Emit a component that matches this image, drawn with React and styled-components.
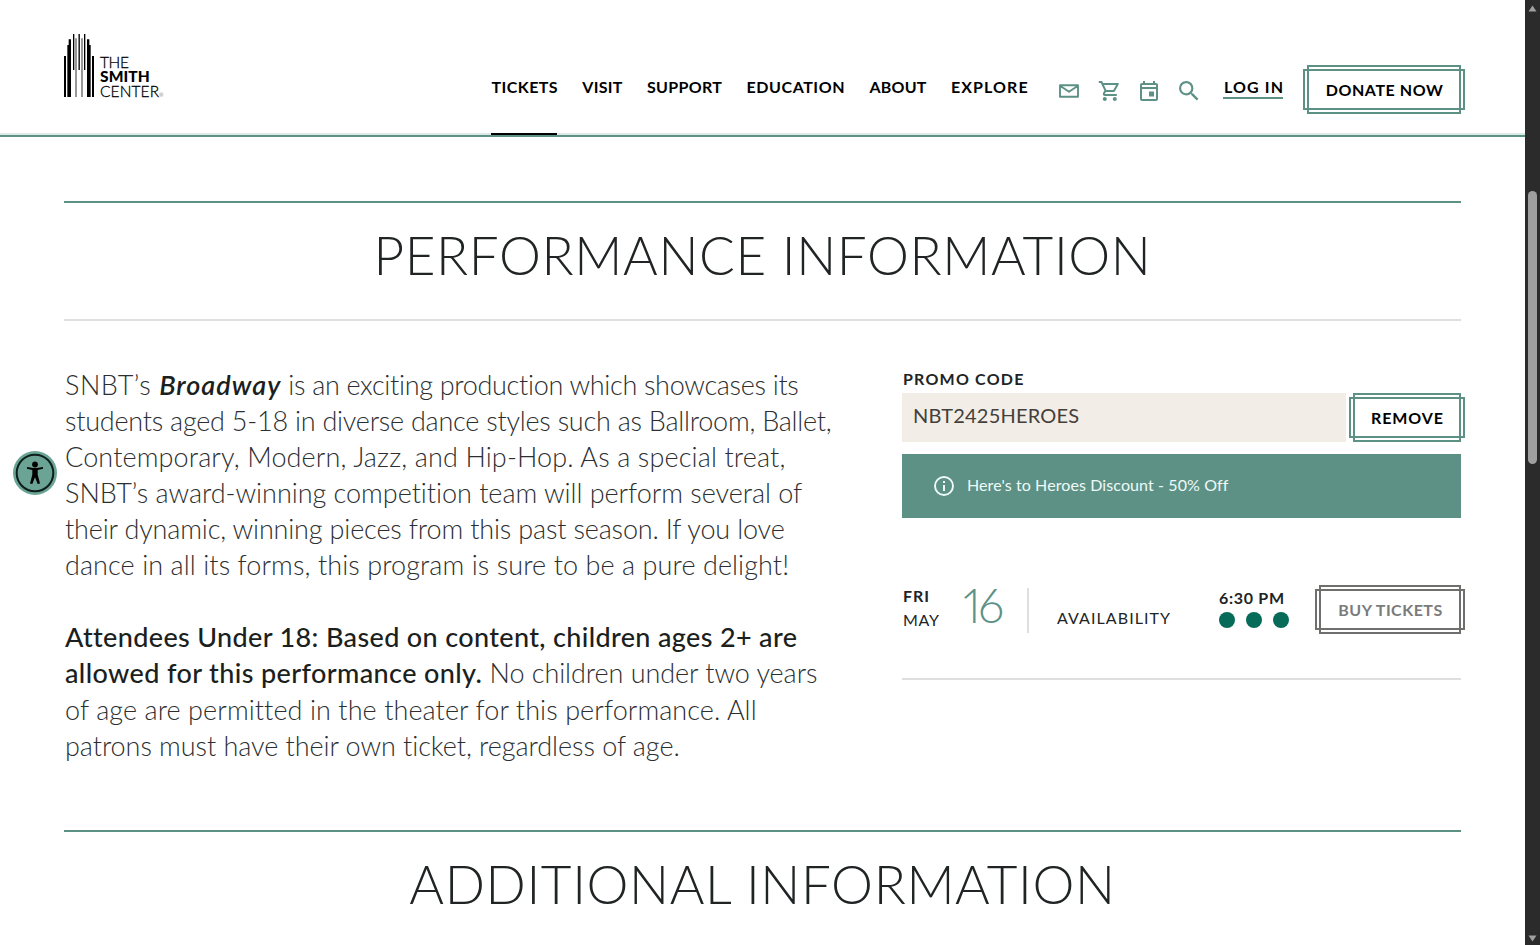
import React from "react";
import styled, { createGlobalStyle } from "styled-components";

const navItems = [
	{ label: "TICKETS", track: 0.43, active: true },
	{ label: "VISIT", track: 0.26 },
	{ label: "SUPPORT", track: 0.34 },
	{ label: "EDUCATION", track: 0.57 },
	{ label: "ABOUT", track: 0.24 },
	{ label: "EXPLORE", track: 1.1 },
];

function App() {
	return (
		<Window>
			<GlobalStyle />
			<Page>
				<Header />
				<Main>
					<SectionTitle $track={0.6}>PERFORMANCE INFORMATION</SectionTitle>
					<Columns>
						<Description />
						<Booking />
					</Columns>
					<SectionTitle $track={0.6}>ADDITIONAL INFORMATION</SectionTitle>
				</Main>
			</Page>
			<Scrollbar>
				<Arrow viewBox="0 0 9 7">
					<path d="M4.5 0.5 L8.5 6.5 H0.5 Z" />
				</Arrow>
				<Thumb />
				<Arrow viewBox="0 0 9 7">
					<path d="M4.5 6.5 L8.5 0.5 H0.5 Z" />
				</Arrow>
			</Scrollbar>
			<Accessibility />
		</Window>
	);
}

function Header() {
	return (
		<HeaderBar>
			<Logo>
				<svg width="31" height="63" viewBox="0 0 93 189">
					<path d="M0 66h6v123H0zM10 33h4V16h7v173H10zM27 0h4v108h-4zM43.500 0h4v108h-4zM60 0h4v108h-4zM69 16h7v17h4v156H69zM84 66h6v123h-6z" />
					<path fill="#666" d="M34 13h4v176h-4zM52 13h4v176h-4z" />
				</svg>
				<LogoText>
					<LogoLine $track={-0.4}>THE</LogoLine>
					<LogoLine $track={0.1} $heavy>
						SMITH
					</LogoLine>
					<LogoLine $track={0.1}>
						CENTER<small>®</small>
					</LogoLine>
				</LogoText>
			</Logo>
			<Nav>
				{navItems.map((item) => (
					<NavLink key={item.label} $active={item.active}>
						<NavLabel $track={item.track}>{item.label}</NavLabel>
					</NavLink>
				))}
			</Nav>
			<Icons>
				<Icon viewBox="0 0 24 24">
					<path
						d="M3 6.3h18v11.4H3zM3 6.8l9 6 9-6"
						fill="none"
						stroke="currentColor"
						strokeWidth="1.9"
						strokeLinejoin="round"
					/>
				</Icon>
				<Icon viewBox="-0.8 0 24 24">
					<path d="M15.55 13c.75 0 1.41-.41 1.75-1.03l3.58-6.49A.996.996 0 0020.01 4H5.21l-.94-2H1v2h2l3.6 7.59-1.35 2.44C4.52 15.37 5.48 17 7 17h12v-2H7l1.1-2h7.45zM6.16 6h12.15l-2.76 5H8.53L6.16 6zM7 18c-1.1 0-1.99.9-1.99 2S5.9 22 7 22s2-.9 2-2-.9-2-2-2zm10 0c-1.1 0-1.99.9-1.99 2s.89 2 1.99 2 2-.9 2-2-.9-2-2-2z" />
				</Icon>
				<Icon viewBox="0 0 24 24">
					<path d="M19 4h-1V2h-2v2H8V2H6v2H5c-1.1 0-2 .9-2 2v14c0 1.1.9 2 2 2h14c1.1 0 2-.9 2-2V6c0-1.1-.9-2-2-2zm0 16H5V10h14v10zm0-12H5V6h14v2zM12 12.500h5v5h-5z" />
				</Icon>
				<Icon viewBox="1.2 1.2 21.6 21.6">
					<path d="M15.5 14h-.79l-.28-.27A6.471 6.471 0 0016 9.500 6.500 6.500 0 109.500 16c1.610 0 3.090-.590 4.230-1.570l.27.28v.79l5 4.990L20.490 19l-4.990-5zm-6 0C7.010 14 5 11.990 5 9.500S7.010 5 9.500 5 14 7.010 14 9.500 11.990 14 9.500 14z" />
				</Icon>
			</Icons>
			<Login>LOG IN</Login>
			<Donate $width={154} $track={0.56}>
				DONATE NOW
			</Donate>
		</HeaderBar>
	);
}

function Description() {
	return (
		<Copy>
			<Paragraph>
				<Line $track={-0.31}>
					<Run $track={0.5}>SNBT’s </Run>
					<Strong $track={1} $italic>
						Broadway
					</Strong>{" "}
					is an exciting production which showcases its
				</Line>
				<Line $track={-0.24}>
					students aged 5-18 in diverse dance styles such as Ballroom, Ballet,
				</Line>
				<Line $track={0.13}>
					Contemporary, Modern, Jazz, and Hip-Hop. As a special treat,
				</Line>
				<Line $track={-0.03}>
					SNBT’s award-winning competition team will perform several of
				</Line>
				<Line $track={-0.16}>
					their dynamic, winning pieces from this past season. If you love
				</Line>
				<Line $track={0.08}>
					dance in all its forms, this program is sure to be a pure delight!
				</Line>
			</Paragraph>
			<Paragraph $leading={36.4}>
				<Line>
					<Strong $track={0.35}>
						Attendees Under 18: Based on content, children ages 2+ are
					</Strong>
				</Line>
				<Line $track={-0.06}>
					<Strong $track={0.38}>allowed for this performance only.</Strong> No
					children under two years
				</Line>
				<Line $track={0.08}>
					of age are permitted in the theater for this performance. All
				</Line>
				<Line $track={-0.06}>
					patrons must have their own ticket, regardless of age.
				</Line>
			</Paragraph>
		</Copy>
	);
}

function Booking() {
	return (
		<Aside>
			<PromoLabel>PROMO CODE</PromoLabel>
			<PromoRow>
				<PromoInput>NBT2425HEROES</PromoInput>
				<FrameButton $width={108} $track={0.9}>
					REMOVE
				</FrameButton>
			</PromoRow>
			<Notice>
				<svg width="20" height="20" viewBox="0 0 20 20">
					<circle cx="10" cy="10" r="9" fill="none" stroke="currentColor" strokeWidth="1.9" />
					<path d="M9 5h2v2H9zM9 9h2v6H9z" fill="currentColor" />
				</svg>
				<NoticeText>Here's to Heroes Discount - 50% Off</NoticeText>
			</Notice>
			<Performance>
				<DayMonth>
					<Day>FRI</Day>
					<Month>MAY</Month>
				</DayMonth>
				<DateNumber>16</DateNumber>
				<Availability>AVAILABILITY</Availability>
				<Showtime>
					<Time>6:30 PM</Time>
					<Dots>
						<Dot />
						<Dot />
						<Dot />
					</Dots>
				</Showtime>
				<FrameButton $width={142} $track={0.49} $muted>
					BUY TICKETS
				</FrameButton>
			</Performance>
		</Aside>
	);
}

function Accessibility() {
	return (
		<AccessButton>
			<svg width="44" height="44" viewBox="0 0 44 44">
				<circle cx="22" cy="22" r="22" fill="#6ba394" />
				<circle cx="22" cy="22" r="18.300" fill="none" stroke="#0c1f1a" strokeWidth="2" />
				<circle cx="22" cy="13.500" r="2.900" />
				<path d="M14 17.800l5.300 1.200v4.800l-2.300 8.600 2.300.6 2.700-6.800 2.700 6.800 2.300-.6-2.300-8.600V19l5.300-1.200v-1.800l-6 .9h-4l-6-.9z" />
			</svg>
		</AccessButton>
	);
}

const green = "#5d9186";
const hairline = "#dfdfdf";

const GlobalStyle = createGlobalStyle`
	* {
		box-sizing: border-box;
	}

	body {
		margin: 0;
		overflow: hidden;
		background-color: #fff;
		color: #212425;
		font-family: Lato, sans-serif;
	}
`;

const Window = styled.div`
	display: flex;
	height: 945px;
	overflow: hidden;
`;

const Page = styled.div`
	flex: 1;
	white-space: nowrap;
`;

const HeaderBar = styled.header`
	display: flex;
	height: 137px;
	padding: 0 64px;
	border-bottom: 2px solid ${green};
	box-shadow: inset 0 -2px #dce9e4;
	color: #000;
`;

const Logo = styled.div`
	display: flex;
	gap: 5px;
	padding-top: 34px;
`;

const LogoText = styled.div`
	padding-top: 20.5px;
`;

const LogoLine = styled.div`
	font-size: 15.5px;
	font-weight: ${(p) => (p.$heavy ? 900 : 300)};
	line-height: 14.7px;
	letter-spacing: ${(p) => p.$track}px;
	-webkit-text-stroke: ${(p) => (p.$heavy ? 0 : 0.3)}px #000;

	& > small {
		font-size: 5px;
		-webkit-text-stroke: 0;
	}
`;

const Nav = styled.nav`
	display: flex;
	gap: 24.3px;
	height: 135px;
	margin-left: auto;
	margin-right: 28.8px;
`;

const NavLink = styled.a`
	padding-top: 77px;
	border-bottom: 2px solid ${(p) => (p.$active ? "#000" : "transparent")};
	font-size: 16px;
	font-weight: 700;
	line-height: 20px;
`;

const NavLabel = styled.span`
	padding-left: 0.6px;
	margin-right: -0.6px;
	letter-spacing: ${(p) => p.$track}px;
`;

const Icons = styled.div`
	display: flex;
	gap: 16px;
	padding-top: 79px;
	margin-right: 22px;
	color: ${green};
`;

const Icon = styled.svg`
	width: 24px;
	height: 24px;
	fill: currentColor;
`;

const Login = styled.a`
	align-self: flex-start;
	width: 60px;
	height: 22px;
	margin: 77px 24px 0 0;
	padding-left: 1px;
	border-bottom: 2px solid ${green};
	font-size: 16px;
	font-weight: 700;
	line-height: 20px;
	letter-spacing: 1.12px;
`;

// Two offset frames that cross at the corners
const FrameButton = styled.button`
	position: relative;
	flex: none;
	width: ${(p) => p.$width}px;
	height: 49px;
	padding: 0 0 1px 1px;
	border: 2px solid ${(p) => (p.$muted ? "#6f706e" : green)};
	background-color: transparent;
	color: ${(p) => (p.$muted ? "#7b7b7b" : "#000")};
	font-family: inherit;
	font-size: 16px;
	font-weight: 700;
	line-height: 43px;
	letter-spacing: ${(p) => p.$track}px;

	&::after {
		content: "";
		position: absolute;
		inset: 2px -6px;
		border: 2px solid ${(p) => (p.$muted ? "#6f706e" : green)};
	}
`;

const Donate = styled(FrameButton)`
	margin-top: 65px;
`;

const Main = styled.main`
	padding: 64px 64px 0;
`;

const SectionTitle = styled.h2`
	height: 120px;
	margin: 0;
	border-top: 2px solid ${green};
	border-bottom: 2px solid ${hairline};
	font-size: 53px;
	font-weight: 300;
	line-height: 103px;
	letter-spacing: ${(p) => p.$track}px;
	text-align: center;
`;

const Columns = styled.div`
	display: flex;
	justify-content: space-between;
	height: 509px;
	padding-top: 45px;
`;

const Copy = styled.div`
	padding: 1px 0 0 1px;
	color: #2c2f31;
	font-size: 27px;
	font-weight: 300;
`;

const Paragraph = styled.p`
	margin: 0 0 36px;
	line-height: ${(p) => p.$leading || 36}px;
`;

const Line = styled.span`
	display: block;
	letter-spacing: ${(p) => p.$track || 0}px;
`;

const Run = styled.span`
	letter-spacing: ${(p) => p.$track}px;
`;

const Strong = styled.strong`
	color: #1c1f20;
	font-style: ${(p) => (p.$italic ? "italic" : "normal")};
	font-weight: ${(p) => (p.$italic ? 600 : 500)};
	letter-spacing: ${(p) => p.$track}px;
`;

const Aside = styled.aside`
	width: 559px;
	padding-top: 3px;
`;

const PromoLabel = styled.div`
	height: 24px;
	padding-left: 1px;
	font-size: 16px;
	font-weight: 700;
	line-height: 20px;
	letter-spacing: 1.2px;
`;

const PromoRow = styled.div`
	display: flex;
	gap: 7px;
	margin-bottom: 12px;
`;

const PromoInput = styled.div`
	flex: 1;
	height: 49px;
	padding-left: 11px;
	background-color: #f2ede6;
	color: #443f3a;
	font-size: 20px;
	line-height: 45px;
	letter-spacing: 0.19px;
`;

const Notice = styled.div`
	display: flex;
	align-items: center;
	gap: 13px;
	height: 64px;
	padding-left: 32px;
	background-color: ${green};
	color: #eefaf6;
`;

const NoticeText = styled.span`
	padding-bottom: 4px;
	font-size: 16px;
	letter-spacing: 0.1px;
`;

const Performance = styled.div`
	display: flex;
	height: 162px;
	padding-top: 67px;
	border-bottom: 2px solid ${hairline};
`;

const DayMonth = styled.div`
	width: 61px;
	padding-left: 1px;
	font-size: 16px;
	line-height: 24px;
`;

const Day = styled.div`
	margin-top: -1px;
	font-weight: 700;
	letter-spacing: 0.96px;
`;

const Month = styled.div`
	letter-spacing: 0.72px;
`;

const DateNumber = styled.div`
	width: 66px;
	height: 45px;
	margin-top: 3px;
	border-right: 2px solid ${hairline};
	color: ${green};
	font-size: 47px;
	font-weight: 300;
	font-variant-numeric: proportional-nums;
	line-height: 34px;
	letter-spacing: -2.6px;
`;

const Availability = styled.div`
	width: 162px;
	margin: 23px 0 0 28px;
	font-size: 16px;
	line-height: 20px;
	letter-spacing: 1.07px;
`;

const Showtime = styled.div`
	flex: 1;
	padding-top: 3px;
`;

const Time = styled.div`
	font-size: 16px;
	font-weight: 700;
	line-height: 20px;
	letter-spacing: 0.69px;
`;

const Dots = styled.div`
	display: flex;
	gap: 11px;
	padding-top: 4px;
`;

const Dot = styled.span`
	width: 16px;
	height: 16px;
	border-radius: 50%;
	background-color: #066b58;
`;

const Scrollbar = styled.div`
	display: flex;
	flex-direction: column;
	justify-content: space-between;
	align-items: center;
	width: 15px;
	padding: 5px 0 3px;
	background-color: #2b2b2b;
`;

const Arrow = styled.svg`
	width: 9px;
	height: 7px;
	fill: #a0a0a0;
`;

const Thumb = styled.div`
	width: 9px;
	height: 273px;
	margin: 179px 0 auto;
	border-radius: 5px;
	background-color: #9f9f9f;
`;

const AccessButton = styled.button`
	position: fixed;
	left: 13px;
	top: 451px;
	width: 44px;
	height: 44px;
	padding: 0;
	border: none;
	background: none;
`;

export default App;
